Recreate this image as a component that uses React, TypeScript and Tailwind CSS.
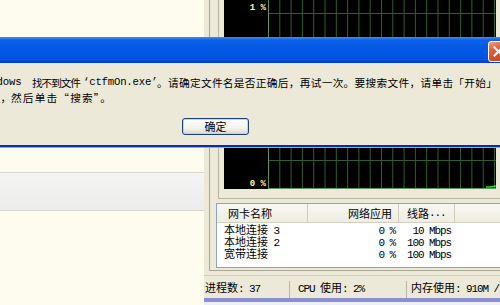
import React from "react";

function Lt({ children }: { children: React.ReactNode }) {
  return (
    <span className="font-['Liberation_Mono',monospace] tracking-[-1.1px]">
      {children}
    </span>
  );
}

function Graph() {
  const xs: number[] = [];
  for (let k = 0; k < 21; k++) xs.push(44.5 + k * 11.3);
  return (
    <svg width="272" height="189" viewBox="0 0 272 189" className="block">
      <rect x="0" y="0" width="272" height="189" fill="#000" />
      {[13.5, 62.5, 111.5, 160.5].map((y) => (
        <line key={y} x1="44" y1={y} x2="272" y2={y} stroke="#2f5f2f" strokeWidth="1" />
      ))}
      {xs.map((x, i) => (
        <line
          key={x}
          x1={x}
          y1="0"
          x2={x}
          y2="189"
          stroke={i === 0 ? "#5e925e" : "#2f5f2f"}
          strokeWidth="1"
        />
      ))}
      <line x1="44" y1="188.5" x2="272" y2="188.5" stroke="#5e925e" strokeWidth="1" />
      <polyline points="262,187 266,187 272,186" fill="none" stroke="#19e619" strokeWidth="1.5" />
      <text x="42" y="10" textAnchor="end" fontSize="9" fontFamily="Liberation Mono, monospace" fontWeight="bold" fill="#ffff9a">
        1 %
      </text>
      <text x="42" y="186" textAnchor="end" fontSize="9" fontFamily="Liberation Mono, monospace" fontWeight="bold" fill="#ffff9a">
        0 %
      </text>
    </svg>
  );
}

function CloseBtn() {
  return (
    <div className="w-[21px] h-[21px] rounded-[3px] border border-white bg-[linear-gradient(160deg,#f0a080_0%,#e0603a_35%,#c8401c_100%)] flex items-center justify-center">
      <svg width="11" height="11" viewBox="0 0 11 11">
        <path d="M1.5 1.5 L9.5 9.5 M9.5 1.5 L1.5 9.5" stroke="#fff" strokeWidth="2" strokeLinecap="square" />
      </svg>
    </div>
  );
}

const J = "shrink-0 [text-align-last:justify] whitespace-nowrap";
const MONO = "shrink-0 whitespace-nowrap font-['Liberation_Mono',monospace] tracking-[-0.22px]";

export default function App() {
  return (
    <div className="relative w-[500px] h-[305px] overflow-hidden bg-[#fefcef] font-['Noto_Sans_CJK_SC',sans-serif] text-black">
      {/* background window on the left */}
      <div className="absolute left-0 top-0 w-[204px] h-[305px] flex flex-col bg-[#fefcef]">
        <div className="h-[172px]" />
        <div className="h-[39px] border-t border-b border-[#d9d9d4] bg-[linear-gradient(180deg,#f4f4f2,#ececea)]" />
        <div className="flex-1" />
      </div>

      {/* task manager window */}
      <div className="absolute left-[204px] top-0 w-[300px] h-[305px] flex flex-col">
        <div className="flex h-[298px]">
          <div className="w-[3px] bg-[#8a8fd6]" />
          <div className="w-[1px] bg-[#dfe0f4]" />
          <div className="flex-1 bg-[#ece9d8] flex flex-col">
            <div className="ml-[5px] h-[271px] shrink-0 border-l border-b border-[#a9a795] pl-[8px] flex flex-col">
              <div className="border-l border-b border-[#b8b5a3] pl-[5px] pb-[9px]">
                <Graph />
              </div>
              <div className="ml-[-2px] mt-[4px] h-[65px] shrink-0 border border-[#8ea4bd] bg-white flex flex-col text-[11px] leading-[12px]">
                <div className="h-[19px] shrink-0 flex items-stretch bg-[linear-gradient(180deg,#f8f7f2,#efede3)] border-b border-[#d5d1c0]">
                  <div className="w-[91px] flex items-center pl-[11px] border-r border-[#cfccbb]">网卡名称</div>
                  <div className="w-[91px] flex items-center justify-end pr-[6px] border-r border-[#cfccbb]">网络应用</div>
                  <div className="w-[56px] flex items-center pl-[8px] border-r border-[#cfccbb]">
                    线路<Lt>...</Lt>
                  </div>
                  <div className="flex-1" />
                </div>
                {[
                  ["本地连接", " 3", "10 Mbps"],
                  ["本地连接", " 2", "100 Mbps"],
                  ["宽带连接", "", "100 Mbps"],
                ].map(([n, d, s], i) => (
                  <div key={i} className="h-[12px] shrink-0 flex whitespace-nowrap">
                    <div className="w-[91px] pl-[7px]">
                      {n}
                      {d ? <Lt>{d}</Lt> : null}
                    </div>
                    <div className="w-[91px] text-right pr-[4px]">
                      <Lt>0 %</Lt>
                    </div>
                    <div className="w-[56px] text-right pr-[4px]">
                      <Lt>{s}</Lt>
                    </div>
                  </div>
                ))}
              </div>
            </div>
            <div className="mt-[4px] flex-1 border-t border-[#d2cfbe] flex text-[11px] leading-[12px] whitespace-nowrap pt-[5px]">
              <div className="w-[86px] pl-[1px] border-r border-[#b7b4a2]">
                进程数<Lt>: 37</Lt>
              </div>
              <div className="w-[117px] pl-[8px] border-r border-[#b7b4a2]">
                <Lt>CPU </Lt>使用<Lt>: 2%</Lt>
              </div>
              <div className="flex-1 pl-[4px] overflow-hidden">
                内存使用<Lt>: 910M / 2046M</Lt>
              </div>
            </div>
          </div>
        </div>
        <div className="h-[4px] bg-[#8a8fd6]" />
        <div className="flex-1 bg-[#eceef8]" />
      </div>

      {/* error dialog */}
      <div className="absolute left-[-70px] top-[37px] w-[584px] flex flex-col">
        <div className="h-[26px] bg-[linear-gradient(180deg,#3d8ef7_0%,#0b61e8_12%,#0258e6_50%,#0553df_85%,#0340c4_100%)] flex items-start justify-end pr-[5px] pt-[4px]">
          <CloseBtn />
        </div>
        <div className="h-[82px] bg-[#ece9d8] flex flex-col">
          <div className="pt-[12px] text-[10.7px] leading-[15px]">
            <div className="flex pl-[48px]">
              <span className={MONO + " w-[54px]"}>Windows</span>
              <span className="shrink-0 whitespace-nowrap w-[48px] tracking-[-1.1px]">找不到文件</span>
              <span className={MONO + " w-[77px] pl-[3px]"}>‘ctfmOn.exe’</span>
              <span className={J + " w-[340px]"}>。请确定文件名是否正确后，再试一次。要搜索文件，请单击「开始」</span>
            </div>
            <div className="flex pl-[49px]">
              <span className={J + " w-[32px]"}>按钮，</span>
              <span className={J + " w-[100px]"}>然后单击“搜索”。</span>
            </div>
          </div>
          <div className="pl-[252px] mt-[13px]">
            <div className="w-[67px] h-[17px] rounded-[3px] border border-[#1c3f7a] bg-[linear-gradient(180deg,#ffffff_0%,#f4f3ee_60%,#dcd7cb_100%)] shadow-[inset_0_0_0_1px_#c2d0f2] flex items-center justify-center text-[11px] leading-none">
              确定
            </div>
          </div>
        </div>
        <div className="h-[2px] bg-[#0a2ea8]" />
        <div className="h-[1px] bg-[#8aa8f0]" />
      </div>
    </div>
  );
}
